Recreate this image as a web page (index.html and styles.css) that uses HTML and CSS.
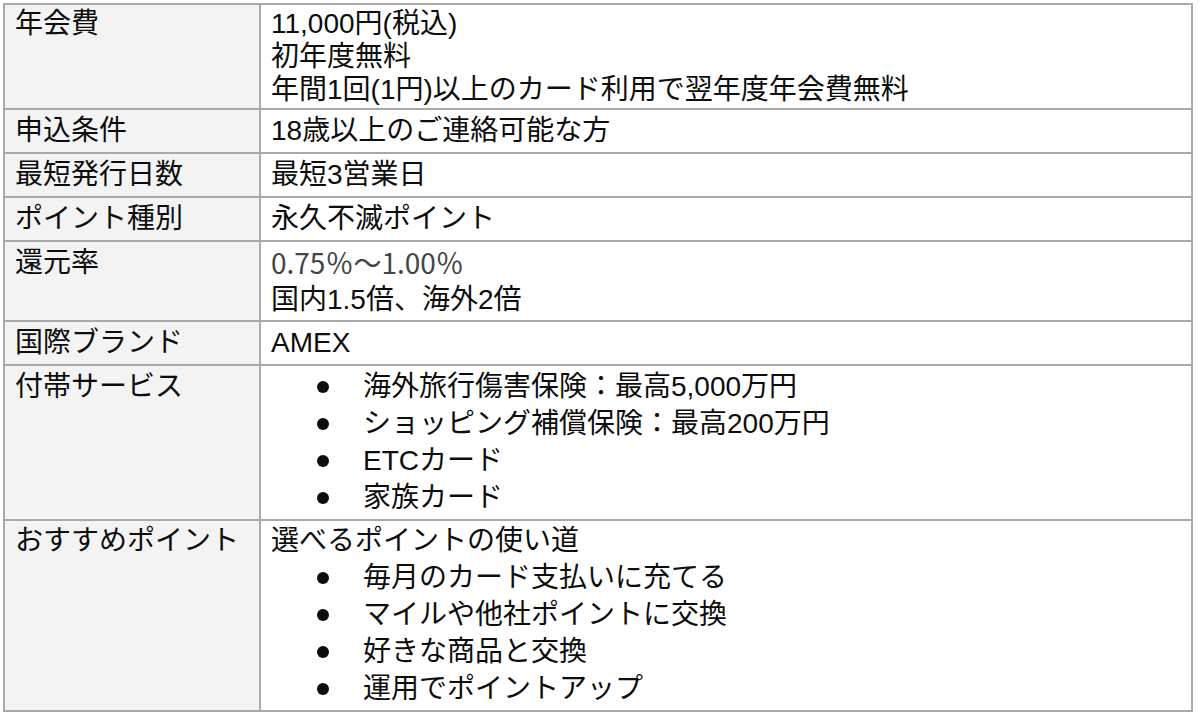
FILE: index.html
```html
<!DOCTYPE html>
<html lang="ja">
<head>
<meta charset="utf-8">
<title>カード詳細</title>
<link rel="stylesheet" href="styles.css">
</head>
<body>
<div class="spec">
  <div class="label r1">年会費</div>
  <div class="value r1">
    <div>11,000円(税込)</div>
    <div>初年度無料</div>
    <div>年間1回(1円)以上のカード利用で翌年度年会費無料</div>
  </div>

  <div class="label">申込条件</div>
  <div class="value">18歳以上のご連絡可能な方</div>

  <div class="label">最短発行日数</div>
  <div class="value">最短3営業日</div>

  <div class="label">ポイント種別</div>
  <div class="value">永久不滅ポイント</div>

  <div class="label r5">還元率</div>
  <div class="value r5">
    <div class="muted">0.75％〜1.00％</div>
    <div>国内1.5倍、海外2倍</div>
  </div>

  <div class="label">国際ブランド</div>
  <div class="value">AMEX</div>

  <div class="label list-row">付帯サービス</div>
  <div class="value list-row">
    <ul class="bullets">
      <li><span class="dot"></span><span>海外旅行傷害保険：最高5,000万円</span></li>
      <li><span class="dot"></span><span>ショッピング補償保険：最高200万円</span></li>
      <li><span class="dot"></span><span>ETCカード</span></li>
      <li><span class="dot"></span><span>家族カード</span></li>
    </ul>
  </div>

  <div class="label list-row last">おすすめポイント</div>
  <div class="value list-row last">
    <div>選べるポイントの使い道</div>
    <ul class="bullets">
      <li><span class="dot"></span><span>毎月のカード支払いに充てる</span></li>
      <li><span class="dot"></span><span>マイルや他社ポイントに交換</span></li>
      <li><span class="dot"></span><span>好きな商品と交換</span></li>
      <li><span class="dot"></span><span>運用でポイントアップ</span></li>
    </ul>
  </div>
</div>
</body>
</html>
```

FILE: styles.css
```css
html, body {
  margin: 0;
  padding: 0;
  background: #ffffff;
}

body {
  font-family: "Liberation Sans", "Noto Sans CJK JP", sans-serif;
  font-size: 28px;
  color: #0d0d0d;
}

.spec {
  margin: 3px 0 0 3px;
  width: 1190px;
  box-sizing: border-box;
  display: grid;
  grid-template-columns: 256px 1fr;
  border-top: 2px solid #a9a9a9;
  border-left: 2px solid #a9a9a9;
}

.label,
.value {
  border-right: 2px solid #a9a9a9;
  border-bottom: 2px solid #a9a9a9;
  padding: 2px 10px 3px 10px;
  line-height: 37px;
  white-space: nowrap;
}

.label {
  background: #f3f3f3;
}

.value {
  background: #ffffff;
}

.r1 {
  line-height: 33px;
  padding-top: 2px;
  padding-bottom: 2px;
}

.r5 {
  line-height: 37px;
  padding-top: 2px;
  padding-bottom: 2px;
}

.muted {
  font-family: "Noto Sans CJK JP", sans-serif;
  color: #444444;
}

.list-row {
  padding-top: 2px;
  padding-bottom: 3px;
}

.list-row.last {
  padding-top: 1px;
  padding-bottom: 3px;
}

.bullets {
  list-style: none;
  margin: 0;
  padding: 0;
}

.bullets li {
  display: flex;
  align-items: center;
  height: 37px;
  padding-left: 46px;
}

.dot {
  width: 12px;
  height: 12px;
  border-radius: 50%;
  background: #0d0d0d;
  flex: none;
  margin-right: 34px;
}
```
